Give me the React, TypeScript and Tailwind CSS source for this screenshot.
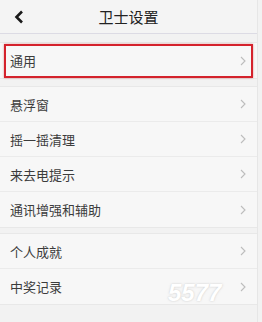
import React from "react";

const Chevron = () => (
  <svg width="6" height="10" viewBox="0 0 6 10" className="shrink-0">
    <path d="M1 1 L5 5 L1 9" fill="none" stroke="#bdbdbd" strokeWidth="1.1" />
  </svg>
);

const Row = ({ label, last }: { label: string; last?: boolean }) => (
  <div
    className={`flex h-[35px] items-center justify-between pl-[10px] pr-[11px] bg-[#f7f7f7] ${
      last ? "" : "border-b border-[#ebebeb]"
    }`}
  >
    <span className="text-[13px] text-[#3c3c3c] leading-none">{label}</span>
    <Chevron />
  </div>
);

const Group = ({ items }: { items: string[] }) => (
  <div className="border-y border-[#e8e8e8]">
    {items.map((t, i) => (
      <Row key={t} label={t} last={i === items.length - 1} />
    ))}
  </div>
);

export default function App() {
  return (
    <div
      className="relative w-[262px] h-[322px] overflow-hidden bg-[#f2f2f2]"
      style={{ fontFamily: '"Noto Sans CJK SC", "Noto Sans", sans-serif' }}
    >
      <div className="w-[258px] h-full border-r border-[#e6e6e6]">
        <div className="relative flex h-[34px] items-center justify-center border-b border-[#dcdbe4] bg-[#f4f4f4]">
          <svg
            width="10"
            height="14"
            viewBox="0 0 10 14"
            className="absolute left-[14px] top-[10px]"
          >
            <path d="M8 1.5 L2.5 7 L8 12.5" fill="none" stroke="#1a1a1a" strokeWidth="2.6" />
          </svg>
          <span className="text-[15px] text-[#222] leading-none">卫士设置</span>
        </div>
        <div className="mt-[8px]">
          <Group items={["通用"]} />
        </div>
        <div className="mt-[7px]">
          <Group items={["悬浮窗", "摇一摇清理", "来去电提示", "通讯增强和辅助"]} />
        </div>
        <div className="mt-[5px]">
          <Group items={["个人成就", "中奖记录"]} />
        </div>
      </div>

      <div className="absolute left-[4px] top-[44px] w-[249px] h-[34px] border-2 border-[#d4222c] shadow-[0_0_2px_rgba(180,0,0,0.4)]" />

      <div
        className="absolute left-[168px] top-[281px] text-[24px] font-bold italic text-white leading-none"
        style={{ textShadow: "0 0 2px rgba(150,150,150,0.5)", fontFamily: '"Liberation Sans", sans-serif' }}
      >
        5577
      </div>
    </div>
  );
}
